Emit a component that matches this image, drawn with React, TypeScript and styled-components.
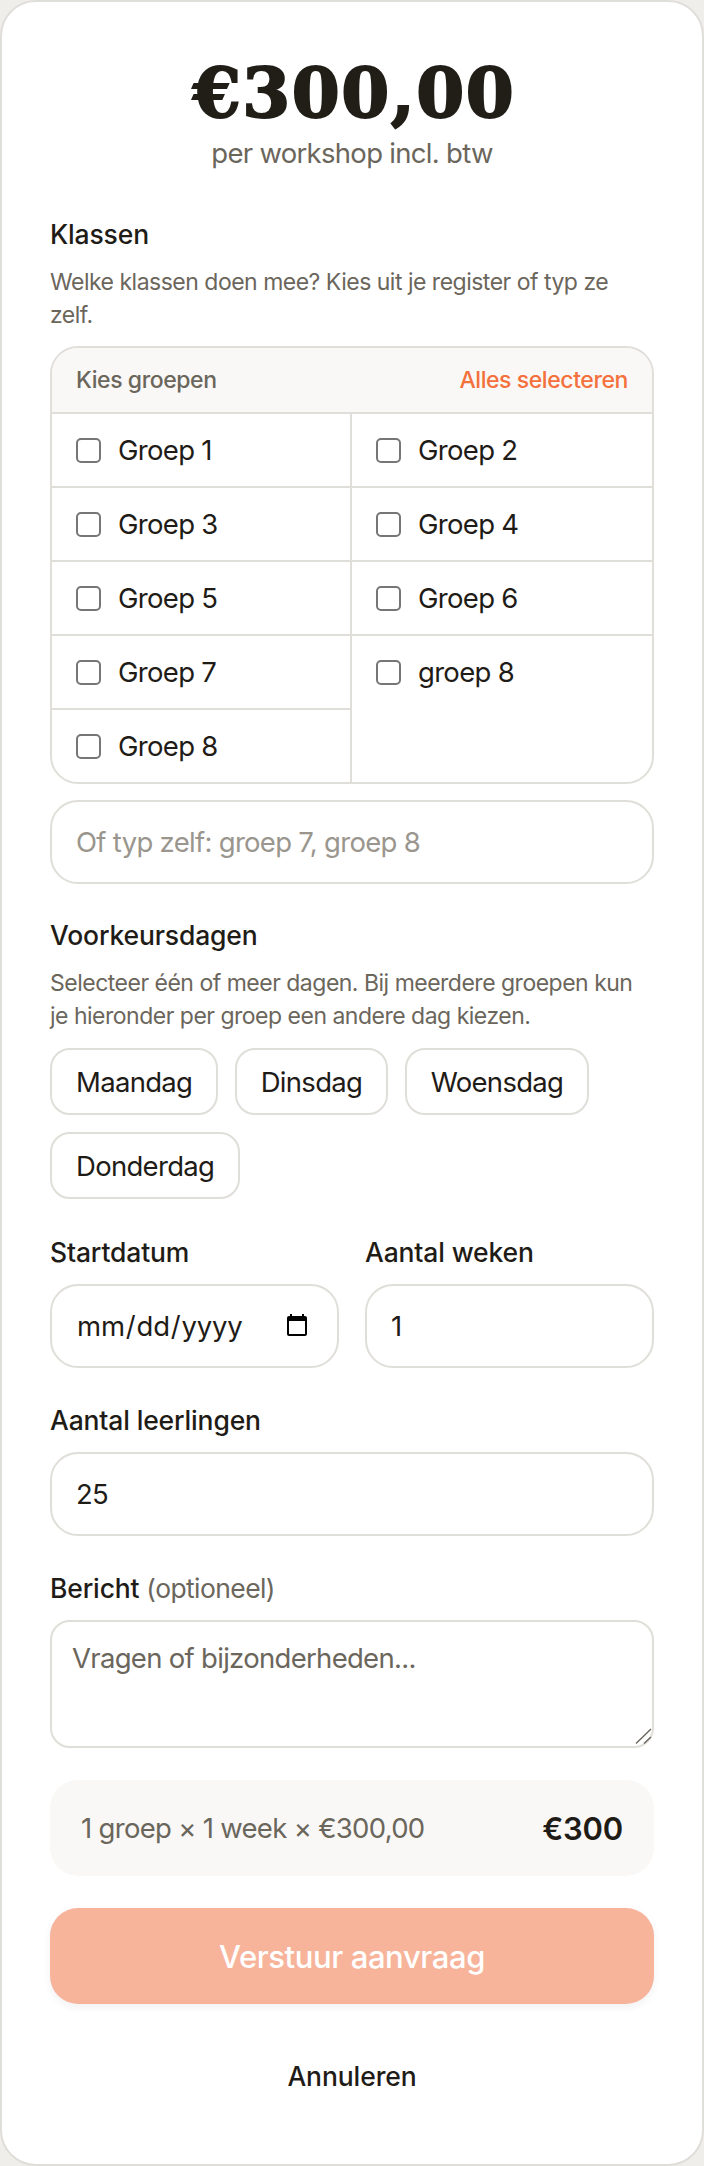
import React from "react";
import styled, { createGlobalStyle, css } from "styled-components";

const Global = createGlobalStyle`
  html, body { margin: 0; padding: 0; background: #f0eeea; }
  * { box-sizing: border-box; }
`;

const line = "#e0ded9";

const bodyText = css`
  font-family: inherit;
  font-size: 27.5px;
  letter-spacing: -0.7px;
  color: #1f1c17;
`;

const Card = styled.div`
  width: 704px;
  height: 2166px;
  background: #fff;
  border: 2px solid ${line};
  border-radius: 36px;
  padding: 59px 48px 0;
  font-family: Inter, "Liberation Sans", sans-serif;
  color: #1f1c17;
`;

const Price = styled.div`
  font-family: "DejaVu Serif", "Liberation Serif", serif;
  font-weight: 700;
  font-size: 69px;
  line-height: 64px;
  padding-left: 4px;
  text-align: center;
  letter-spacing: 1.5px;
  color: #211e18;
  -webkit-text-stroke: 2px #211e18;
`;

const PriceNote = styled.div`
  margin-top: 8px;
  font-size: 27.5px;
  letter-spacing: -0.7px;
  line-height: 40px;
  text-align: center;
  color: #6b665c;
`;

const Label = styled.div`
  font-size: 26.5px;
  font-weight: 460;
  line-height: 36px;
  letter-spacing: -0.15px;
  color: #1f1c17;
`;

const Muted = styled.span`
  font-weight: 400;
  letter-spacing: -0.6px;
  color: #6b665c;
`;

const SectionLabel = styled(Label)<{ $top: number }>`
  margin-top: ${(p) => p.$top}px;
`;

const Help = styled.p`
  margin: 13.5px 0 0;
  font-size: 23px;
  line-height: 33px;
  letter-spacing: -0.5px;
  color: #6b665c;
`;

const GroupBox = styled.div`
  margin-top: 14.5px;
  border: 2px solid ${line};
  border-radius: 28px;
  overflow: hidden;
`;

const GroupHead = styled.div`
  height: 66px;
  display: flex;
  align-items: center;
  justify-content: space-between;
  padding: 0 24px;
  background: #f9f8f6;
  border-bottom: 2px solid ${line};
  font-size: 23px;
  font-weight: 460;
  letter-spacing: -0.42px;
  color: #6b665c;
`;

const SelectAll = styled.button`
  border: 0;
  background: none;
  padding: 0;
  font: inherit;
  letter-spacing: inherit;
  color: #f4703c;
`;

const GroupGrid = styled.div`
  display: grid;
  grid-template-columns: 1fr 1fr;
  grid-template-rows: repeat(4, 74px) 72px;
`;

const GroupCell = styled.label<{ $left: boolean; $last: boolean }>`
  ${bodyText}
  display: flex;
  align-items: center;
  gap: 17px;
  height: ${(p) => (p.$last ? "72px" : "74px")};
  padding: 0 24px;
  border-right: ${(p) => (p.$left ? `2px solid ${line}` : "0")};
  border-bottom: ${(p) => (p.$last ? "0" : `2px solid ${line}`)};
`;

const Check = styled.input`
  appearance: none;
  width: 25px;
  height: 25px;
  margin: 0;
  border: 2px solid #767676;
  border-radius: 5px;
  background: #fff;
  flex: none;
`;

const BaseInput = styled.input`
  ${bodyText}
  display: block;
  width: 100%;
  height: 84px;
  border: 2px solid ${line};
  border-radius: 28px;
  background: #fff;
  padding: 0 24px;
  outline: 0;
  &::placeholder { color: #9a968e; opacity: 1; }
`;

const DateInput = styled(BaseInput)`
  letter-spacing: -0.2px;
  &::-webkit-calendar-picker-indicator {
    width: 26px;
    height: 26px;
    padding: 0;
    margin: 0 3px 0 0;
  }
`;

const TypedInput = styled(BaseInput)`
  margin-top: 16px;
`;

const Chips = styled.div`
  display: flex;
  flex-wrap: wrap;
  gap: 17px 16.5px;
  margin-top: 15.5px;
`;

const Chip = styled.button`
  ${bodyText}
  height: 67px;
  padding: 0 24px;
  border: 2px solid ${line};
  border-radius: 20px;
  background: #fff;
`;

const TwoCols = styled.div`
  display: grid;
  grid-template-columns: 1fr 1fr;
  gap: 26px;
  margin-top: 35px;
`;

const Field = styled.div`
  display: flex;
  flex-direction: column;
  gap: 14px;
`;

const WideField = styled(Field)`
  margin-top: 34px;
`;

const MessageWrap = styled.div`
  position: relative;
`;

const Message = styled.textarea`
  ${bodyText}
  display: block;
  width: 100%;
  height: 128px;
  border: 2px solid ${line};
  border-radius: 20px;
  padding: 18px 20px;
  line-height: 36px;
  resize: none;
  outline: 0;
  &::placeholder { color: #6b665c; opacity: 1; }
`;

const Grip = styled.svg`
  position: absolute;
  right: 2px;
  bottom: 4px;
  pointer-events: none;
`;

const Summary = styled.div`
  ${bodyText}
  margin-top: 32px;
  height: 96px;
  display: flex;
  align-items: center;
  justify-content: space-between;
  padding: 0 31px;
  background: #f9f8f6;
  border-radius: 28px;
  color: #6b665c;
`;

const Total = styled.span`
  font-size: 31px;
  font-weight: 600;
  letter-spacing: -0.2px;
  color: #1f1c17;
`;

const Submit = styled.button`
  display: block;
  width: 100%;
  height: 96px;
  margin-top: 32px;
  border: 0;
  border-radius: 28px;
  background: #f7b49b;
  box-shadow: 0 3px 8px rgba(0, 0, 0, 0.06);
  font-family: inherit;
  font-size: 31px;
  font-weight: 460;
  letter-spacing: -0.4px;
  color: #fff;
`;

const Cancel = styled.button`
  display: block;
  margin: 54px auto 0;
  border: 0;
  background: none;
  padding: 0;
  font-family: inherit;
  font-size: 26.5px;
  font-weight: 460;
  letter-spacing: -0.1px;
  line-height: 36px;
  color: #1f1c17;
`;

const groups = ["Groep 1", "Groep 2", "Groep 3", "Groep 4", "Groep 5", "Groep 6", "Groep 7", "groep 8", "Groep 8"];
const days = ["Maandag", "Dinsdag", "Woensdag", "Donderdag"];

export default function App() {
  return (
    <Card>
      <Global />
      <Price>€300,00</Price>
      <PriceNote>per workshop incl. btw</PriceNote>

      <SectionLabel $top={43}>Klassen</SectionLabel>
      <Help>Welke klassen doen mee? Kies uit je register of typ ze zelf.</Help>
      <GroupBox>
        <GroupHead>
          <span>Kies groepen</span>
          <SelectAll type="button">Alles selecteren</SelectAll>
        </GroupHead>
        <GroupGrid>
          {groups.map((g, i) => (
            <GroupCell key={g} $left={i % 2 === 0} $last={i >= 7}>
              <Check type="checkbox" />
              {g}
            </GroupCell>
          ))}
        </GroupGrid>
      </GroupBox>
      <TypedInput placeholder="Of typ zelf: groep 7, groep 8" />

      <SectionLabel $top={33}>Voorkeursdagen</SectionLabel>
      <Help>Selecteer één of meer dagen. Bij meerdere groepen kun je hieronder per groep een andere dag kiezen.</Help>
      <Chips>
        {days.map((d) => (
          <Chip key={d} type="button">{d}</Chip>
        ))}
      </Chips>

      <TwoCols>
        <Field>
          <Label>Startdatum</Label>
          <DateInput type="date" />
        </Field>
        <Field>
          <Label>Aantal weken</Label>
          <BaseInput type="number" defaultValue={1} />
        </Field>
      </TwoCols>

      <WideField>
        <Label>Aantal leerlingen</Label>
        <BaseInput type="number" defaultValue={25} />
      </WideField>

      <WideField>
        <Label>
          Bericht <Muted>(optioneel)</Muted>
        </Label>
        <MessageWrap>
          <Message placeholder="Vragen of bijzonderheden..." />
          <Grip width="17" height="16" viewBox="0 0 17 16" fill="none" stroke="#6b665c" strokeWidth="1.4">
            <path d="M1 15.5 L16 1" />
            <path d="M9 15.5 L16 9" />
          </Grip>
        </MessageWrap>
      </WideField>

      <Summary>
        <span>1 groep × 1 week × €300,00</span>
        <Total>€300</Total>
      </Summary>
      <Submit type="button">Verstuur aanvraag</Submit>
      <Cancel type="button">Annuleren</Cancel>
    </Card>
  );
}
